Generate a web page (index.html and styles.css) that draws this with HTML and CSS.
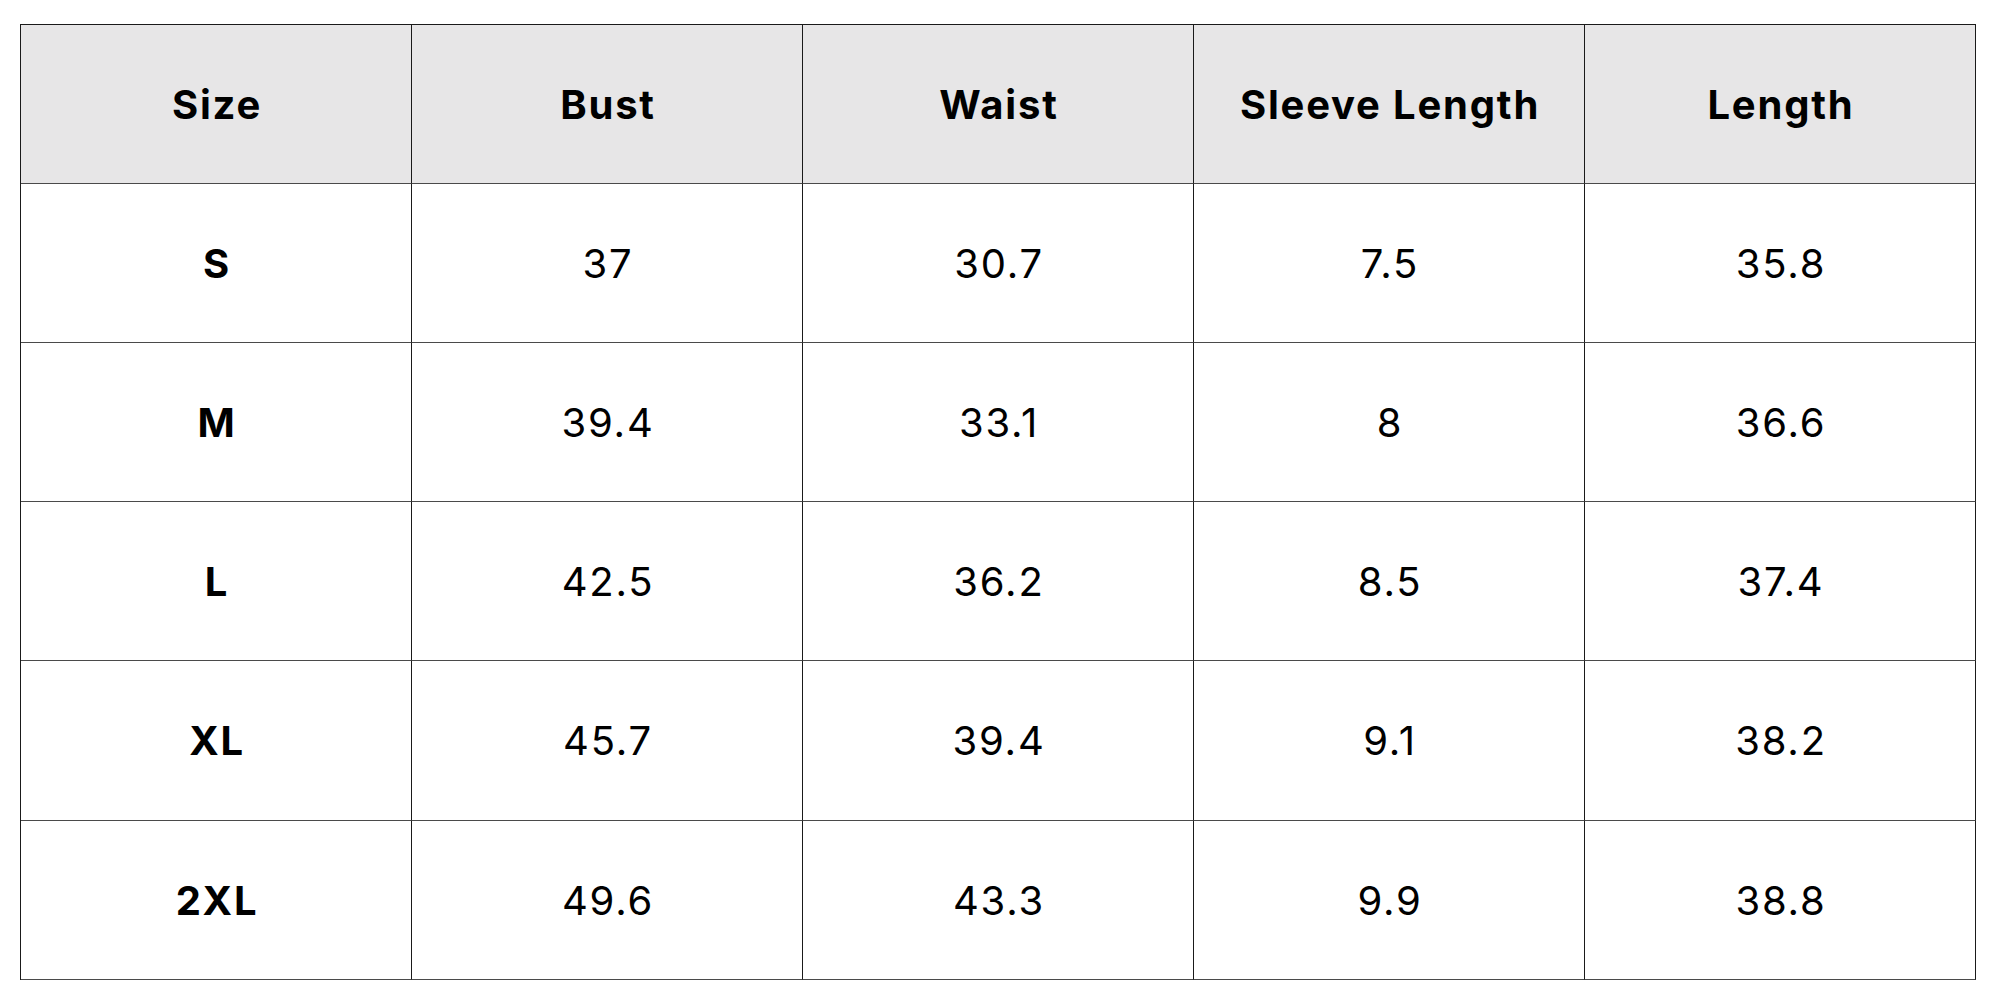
FILE: index.html
```html
<!DOCTYPE html>
<html>
<head>
<meta charset="utf-8">
<link rel="stylesheet" href="styles.css">
</head>
<body>
<div class="chart">
  <div class="cell head">Size</div>
  <div class="cell head">Bust</div>
  <div class="cell head">Waist</div>
  <div class="cell head">Sleeve Length</div>
  <div class="cell head">Length</div>

  <div class="cell size">S</div>
  <div class="cell">37</div>
  <div class="cell">30.7</div>
  <div class="cell">7.5</div>
  <div class="cell">35.8</div>

  <div class="cell size">M</div>
  <div class="cell">39.4</div>
  <div class="cell">33.1</div>
  <div class="cell">8</div>
  <div class="cell">36.6</div>

  <div class="cell size">L</div>
  <div class="cell">42.5</div>
  <div class="cell">36.2</div>
  <div class="cell">8.5</div>
  <div class="cell">37.4</div>

  <div class="cell size tall">XL</div>
  <div class="cell tall">45.7</div>
  <div class="cell tall">39.4</div>
  <div class="cell tall">9.1</div>
  <div class="cell tall">38.2</div>

  <div class="cell size">2XL</div>
  <div class="cell">49.6</div>
  <div class="cell">43.3</div>
  <div class="cell">9.9</div>
  <div class="cell">38.8</div>
</div>
</body>
</html>
```
FILE: styles.css
```css
html, body {
  margin: 0;
  padding: 0;
  background: #ffffff;
}
body {
  padding: 24px 0 0 20px;
  font-family: "Inter", "Open Sans", "Liberation Sans", sans-serif;
  color: #000;
}
.chart {
  display: grid;
  grid-template-columns: repeat(5, 391px);
  grid-auto-rows: auto;
  width: max-content;
  border-top: 1px solid #1a1a1a;
  border-left: 1px solid #1a1a1a;
}
.cell {
  box-sizing: border-box;
  height: 159px;
  display: flex;
  align-items: center;
  justify-content: center;
  padding-left: 2px;
  border-right: 1px solid #1a1a1a;
  border-bottom: 1px solid #4a4a4a;
  font-size: 40px;
  font-weight: 400;
  letter-spacing: 1.8px;
  background: #ffffff;
}
.cell.tall {
  height: 160px;
}
.cell.head {
  background: #e7e6e7;
  font-weight: 700;
}
.cell.size {
  font-weight: 700;
}
```
